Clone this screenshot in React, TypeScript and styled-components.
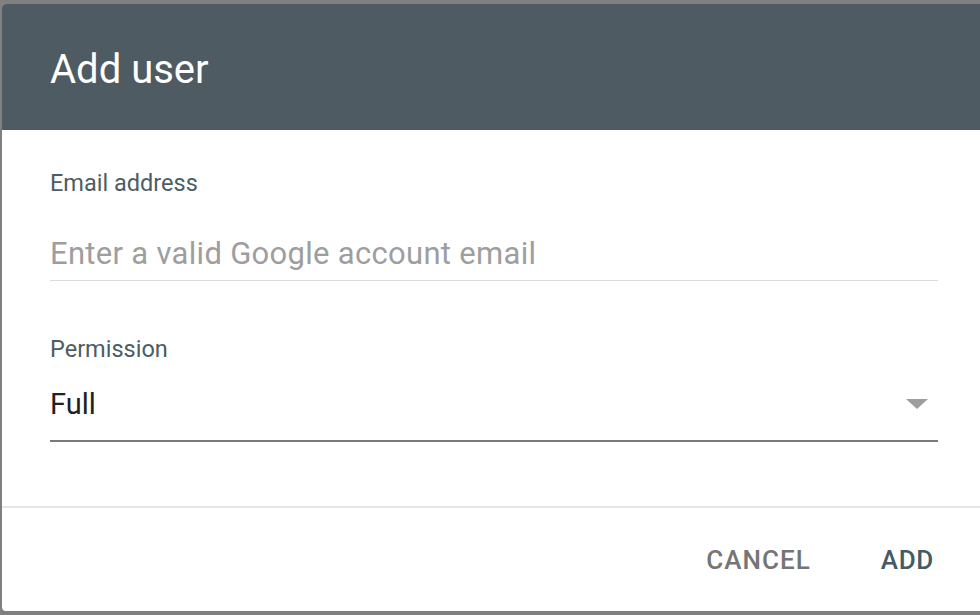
import React from "react";
import styled, { createGlobalStyle } from "styled-components";

const Global = createGlobalStyle`
  html, body { margin: 0; padding: 0; background: #808080; overflow: hidden; }
  body { font-family: Roboto, "Liberation Sans", sans-serif; }
`;

const Page = styled.div`
  width: 980px;
  height: 615px;
  padding: 4px 0 0 2px;
  box-sizing: border-box;
  overflow: hidden;
`;

const Dialog = styled.div`
  width: 982px;
  height: 607px;
  background: #ffffff;
  border-radius: 4px;
  overflow: hidden;
  display: flex;
  flex-direction: column;
`;

const Header = styled.div`
  height: 126px;
  flex: none;
  background: #4f5b62;
  display: flex;
  align-items: center;
  padding: 6px 0 0 48px;
  box-sizing: border-box;
`;

const Title = styled.h1`
  margin: 0;
  font-size: 40px;
  font-weight: 400;
  color: #ffffff;
  line-height: 1;
`;

const Body = styled.div`
  flex: 1;
  padding: 40px 46px 0 48px;
  display: flex;
  flex-direction: column;
`;

const Field = styled.div<{ $gap: number }>`
  display: flex;
  flex-direction: column;
  margin-bottom: ${(p) => p.$gap}px;
`;

const Label = styled.label`
  font-size: 23.5px;
  color: #4e5c64;
  line-height: 26px;
  height: 26px;
`;

const Input = styled.input`
  font-family: Roboto, "Liberation Sans", sans-serif;
  font-size: 31px;
  letter-spacing: 0.3px;
  border: none;
  border-bottom: 1px solid #dcdcdc;
  outline: none;
  padding: 4px 0 0;
  margin: 26px 0 0;
  height: 59px;
  box-sizing: border-box;
  color: #212121;
  background: transparent;
  &::placeholder { color: #9e9e9e; }
`;

const Select = styled.div`
  padding: 25px 0 19px;
  border-bottom: 2px solid #7a7a7a;
  display: flex;
  align-items: center;
  justify-content: space-between;
`;

const Value = styled.span`
  font-size: 29px;
  line-height: 34px;
  color: #212121;
`;

const Caret = styled.span`
  width: 0;
  height: 0;
  border-left: 11.5px solid transparent;
  border-right: 11.5px solid transparent;
  border-top: 10px solid #9e9e9e;
  margin-right: 10px;
`;

const Footer = styled.div`
  height: 105px;
  flex: none;
  border-top: 2px solid #e6e6e6;
  display: flex;
  justify-content: flex-end;
  align-items: center;
  padding-right: 50px;
  gap: 70px;
  box-sizing: border-box;
`;

const Button = styled.button<{ $primary?: boolean }>`
  background: none;
  border: none;
  padding: 0;
  font-family: Roboto, "Liberation Sans", sans-serif;
  font-size: 26px;
  font-weight: 500;
  letter-spacing: ${(p) => (p.$primary ? "0.7px" : "1px")};
  line-height: 30px;
  color: ${(p) => (p.$primary ? "#455a64" : "#757575")};
  cursor: pointer;
  margin-top: 1px;
`;

export default function App() {
  return (
    <>
      <Global />
      <Page>
        <Dialog>
          <Header>
            <Title>Add user</Title>
          </Header>
          <Body>
            <Field $gap={55}>
              <Label>Email address</Label>
              <Input placeholder="Enter a valid Google account email" />
            </Field>
            <Field $gap={0}>
              <Label>Permission</Label>
              <Select>
                <Value>Full</Value>
                <Caret />
              </Select>
            </Field>
          </Body>
          <Footer>
            <Button>CANCEL</Button>
            <Button $primary>ADD</Button>
          </Footer>
        </Dialog>
      </Page>
    </>
  );
}
